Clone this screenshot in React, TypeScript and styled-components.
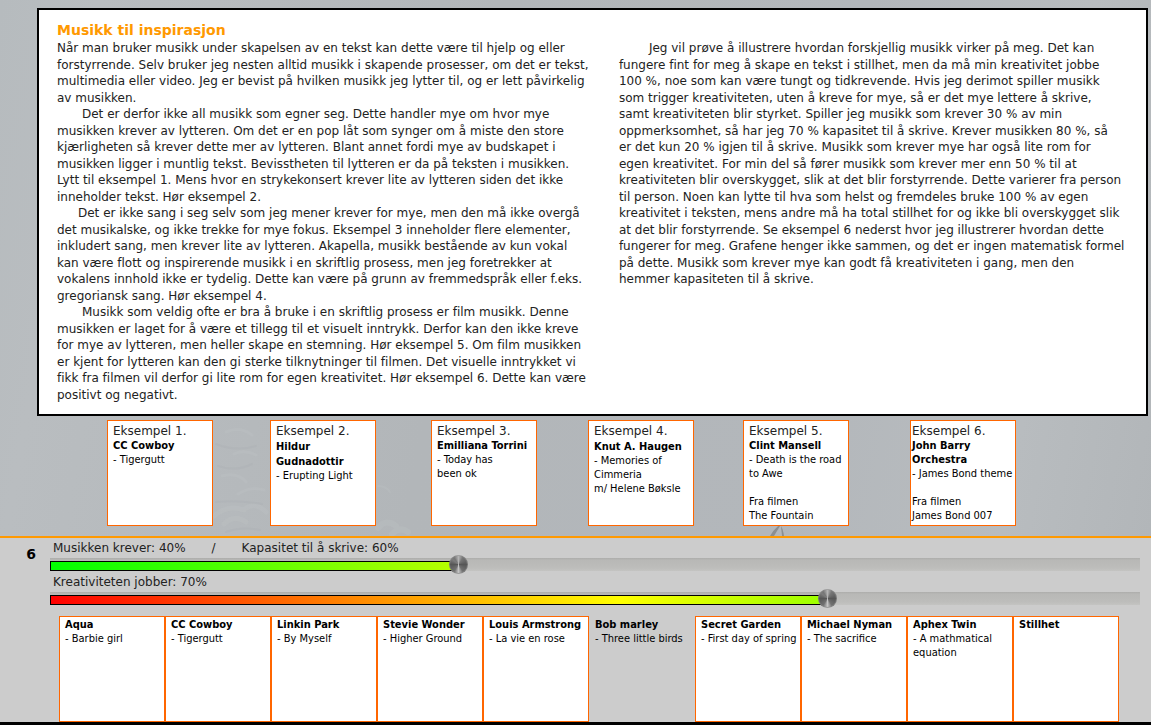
import React, { useState } from "react";
import styled, { createGlobalStyle, css } from "styled-components";

const GlobalStyle = createGlobalStyle`
  * { box-sizing: border-box; }
  body {
    margin: 0;
    background: #cccccc;
    font-family: "DejaVu Sans", "Liberation Sans", sans-serif;
    font-size: 12px;
    font-variant-ligatures: none;
    color: #222222;
  }
  p, h1, h2 { margin: 0; }
`;

const Page = styled.div`
  min-height: 100vh;
  display: flex;
  flex-direction: column;
`;

const Stage = styled.main`
  position: relative;
  padding: 8px 3px 10px 37px;
  background: linear-gradient(100deg, #b6bbbe 0%, #b9bdc0 8%, #b2b6b9 40%, #b3b7bb 70%, #b8bcbf 88%, #b2b6b9 100%);
`;

const Scenery = styled.svg`
  position: absolute;
  left: 0;
  bottom: 0;
  width: 1151px;
  max-width: 100%;
  height: 124px;
`;

const Article = styled.article`
  position: relative;
  display: grid;
  grid-template-columns: 20fr 19fr;
  column-gap: 26px;
  padding: 11px 18px 11px;
  border: 2px solid #000000;
  background: #ffffff;
`;

const Title = styled.h1`
  grid-column: 1 / -1;
  padding-bottom: 1px;
  color: #ff9900;
  font-size: 14px;
  line-height: 18px;
`;

const Column = styled.div`
  display: grid;
  grid-auto-rows: 17px 16px;
  align-content: start;
  white-space: nowrap;
`;

const Paragraph = styled.p<{ $indent: number }>`
  display: contents;
  line-height: 16px;
  span:first-child { padding-left: ${(p) => p.$indent}px; }
`;

const ExampleRow = styled.section`
  position: relative;
  display: grid;
  grid-template-columns: 163fr 161fr 157fr 155fr 167fr 241fr;
  margin: 4px -3px 0 0;
  padding-left: 70px;
`;

const Card = styled.button<{ $active?: boolean; $tight?: boolean }>`
  appearance: none;
  display: flex;
  flex-direction: column;
  width: 106px;
  height: 106px;
  padding: 1px 0 0 ${(p) => (p.$tight ? 1 : 5)}px;
  border: 1px solid #ff6600;
  border-radius: 0;
  background: #ffffff;
  color: #000000;
  font-family: "DejaVu Sans Condensed", "DejaVu Sans", sans-serif;
  font-size: 11px;
  line-height: 14px;
  text-align: left;
  white-space: pre;
  cursor: pointer;
  ${(p) => p.$active && css`
    border-color: transparent;
    background: transparent;
  `}
`;

const CardTitle = styled.span`
  padding-top: 1px;
  font-family: "DejaVu Sans", sans-serif;
  font-size: 12px;
  line-height: 16px;
  color: #222222;
`;

const Artist = styled.strong<{ $loose?: boolean }>`
  line-height: ${(p) => (p.$loose ? 15 : 14)}px;
`;

const Player = styled.section`
  flex: 1;
  display: grid;
  grid-template-columns: 50px 1fr;
  padding-right: 11px;
  border-top: 2px solid #ff9900;
  border-bottom: 3px solid #000000;
  background: #cccccc;
`;

const Step = styled.h2`
  padding: 7px 14px 0 0;
  color: #000000;
  font-size: 14px;
  line-height: 18px;
  text-align: right;
`;

const SliderLabel = styled.label`
  display: flex;
  gap: 26px;
  padding: 2px 0 0 3px;
  line-height: 16px;
`;

const Track = styled.div`
  display: grid;
  grid-template-rows: 13px;
  align-items: center;
  margin-top: 2px;
  background: linear-gradient(#adadab, #b8b8b6 2px, #bdbdbb 10px, #c4c4c2);
  > * { grid-area: 1 / 1; }
`;

const Fill = styled.div<{ $colors: string }>`
  align-self: end;
  height: 10px;
  border: 1px solid #000000;
  background: linear-gradient(90deg, ${(p) => p.$colors});
`;

const Range = styled.input`
  appearance: none;
  z-index: 1;
  width: 100%;
  height: 19px;
  margin: 0;
  background: transparent;
  &::-webkit-slider-thumb {
    appearance: none;
    width: 19px;
    height: 19px;
    border: 1px solid #88888899;
    border-radius: 50%;
    background: conic-gradient(#b4b4b4, #767676 9%, #6a6a6a 16%, #565656 25%, #666666 34%, #707070 41%, #c4c4c4 50%, #707070 59%, #666666 66%, #565656 75%, #7c7c7c 86%, #767676 91%, #b4b4b4);
  }
`;

const SliderGroup = styled.div`
  height: 34px;
`;

const Playlist = styled.div`
  display: flex;
  padding: 10px 0 0 9px;
`;

const LEFT: { indent: number; lines: string[] }[] = [
  { indent: 0, lines: [
    "Når man bruker musikk under skapelsen av en tekst kan dette være til hjelp og eller",
    "forstyrrende. Selv bruker jeg nesten alltid musikk i skapende prosesser, om det er tekst,",
    "multimedia eller video. Jeg er bevist på hvilken musikk jeg lytter til, og er lett påvirkelig",
    "av musikken.",
  ] },
  { indent: 25, lines: [
    "Det er derfor ikke all musikk som egner seg. Dette handler mye om hvor mye",
    "musikken krever av lytteren. Om det er en pop låt som synger om å miste den store",
    "kjærligheten så krever dette mer av lytteren. Blant annet fordi mye av budskapet i",
    "musikken ligger i muntlig tekst. Bevisstheten til lytteren er da på teksten i musikken.",
    "Lytt til eksempel 1. Mens hvor en strykekonsert krever lite av lytteren siden det ikke",
    "inneholder tekst. Hør eksempel 2.",
  ] },
  { indent: 21, lines: [
    "Det er ikke sang i seg selv som jeg mener krever for mye, men den må ikke overgå",
    "det musikalske, og ikke trekke for mye fokus. Eksempel 3 inneholder flere elementer,",
    "inkludert sang, men krever lite av lytteren. Akapella, musikk bestående av kun vokal",
    "kan være flott og inspirerende musikk i en skriftlig prosess, men jeg foretrekker at",
    "vokalens innhold ikke er tydelig. Dette kan være på grunn av fremmedspråk eller f.eks.",
    "gregoriansk sang. Hør eksempel 4.",
  ] },
  { indent: 25, lines: [
    "Musikk som veldig ofte er bra å bruke i en skriftlig prosess er film musikk. Denne",
    "musikken er laget for å være et tillegg til et visuelt inntrykk. Derfor kan den ikke kreve",
    "for mye av lytteren, men heller skape en stemning. Hør eksempel 5. Om film musikken",
    "er kjent for lytteren kan den gi sterke tilknytninger til filmen. Det visuelle inntrykket vi",
    "fikk fra filmen vil derfor gi lite rom for egen kreativitet. Hør eksempel 6. Dette kan være",
    "positivt og negativt.",
  ] },
];

const RIGHT: { indent: number; lines: string[] }[] = [
  { indent: 30, lines: [
    "Jeg vil prøve å illustrere hvordan forskjellig musikk virker på meg. Det kan",
    "fungere fint for meg å skape en tekst i stillhet, men da må min kreativitet jobbe",
    "100 %, noe som kan være tungt og tidkrevende. Hvis jeg derimot spiller musikk",
    "som trigger kreativiteten, uten å kreve for mye, så er det mye lettere å skrive,",
    "samt kreativiteten blir styrket. Spiller jeg musikk som krever 30 % av min",
    "oppmerksomhet, så har jeg 70 % kapasitet til å skrive. Krever musikken 80 %, så",
    "er det kun 20 % igjen til å skrive. Musikk som krever mye har også lite rom for",
    "egen kreativitet. For min del så fører musikk som krever mer enn 50 % til at",
    "kreativiteten blir overskygget, slik at det blir forstyrrende. Dette varierer fra person",
    "til person. Noen kan lytte til hva som helst og fremdeles bruke 100 % av egen",
    "kreativitet i teksten, mens andre må ha total stillhet for og ikke bli overskygget slik",
    "at det blir forstyrrende. Se eksempel 6 nederst hvor jeg illustrerer hvordan dette",
    "fungerer for meg. Grafene henger ikke sammen, og det er ingen matematisk formel",
    "på dette. Musikk som krever mye kan godt få kreativiteten i gang, men den",
    "hemmer kapasiteten til å skrive.",
  ] },
];

const EXAMPLES = [
  { title: "Eksempel 1.", artist: "CC Cowboy", text: "- Tigergutt" },
  { title: "Eksempel 2.", artist: "Hildur\nGudnadottir", text: "- Erupting Light", loose: true },
  { title: "Eksempel 3.", artist: "Emilliana Torrini", text: "- Today has\nbeen ok" },
  { title: "Eksempel 4.", artist: "Knut A. Haugen", text: "- Memories of\nCimmeria\nm/ Helene Bøksle", loose: true },
  { title: "Eksempel 5.", artist: "Clint Mansell", text: "- Death is the road\nto Awe\n\nFra filmen\nThe Fountain" },
  { title: "Eksempel 6.", artist: "John Barry\nOrchestra", text: "- James Bond theme\n\nFra filmen\nJames Bond 007", tight: true },
];

const SONGS = [
  ["Aqua", "- Barbie girl"],
  ["CC Cowboy", "- Tigergutt"],
  ["Linkin Park", "- By Myself"],
  ["Stevie Wonder", "- Higher Ground"],
  ["Louis Armstrong", "- La vie en rose"],
  ["Bob marley", "- Three little birds"],
  ["Secret Garden", "- First day of spring"],
  ["Michael Nyman", "- The sacrifice"],
  ["Aphex Twin", "- A mathmatical\nequation"],
  ["Stillhet", ""],
];

function Text({ paragraphs }: { paragraphs: typeof LEFT }) {
  return (
    <Column>
      {paragraphs.map((p, i) => (
        <Paragraph key={i} $indent={p.indent}>
          {p.lines.map((line) => <span key={line}>{line} </span>)}
        </Paragraph>
      ))}
    </Column>
  );
}

/* Faint snowy branches and a dark twig behind the example cards. */
function Backdrop() {
  return (
    <Scenery viewBox="0 0 1151 124" preserveAspectRatio="xMinYMax meet" aria-hidden="true">
      <g fill="none" stroke="#c3c8ca" strokeLinecap="round" opacity="0.22">
        <path d="M226 20q14-6 26 3M234 42q10-5 22 1M222 64q16-4 24 6M238 82q12-8 26-4" strokeWidth="3" />
        <path d="M214 104q14-12 30-6M224 112q10-10 22-2M246 96q10-6 20 4" strokeWidth="5" />
        <path d="M378 116q8-10 18-2M392 122q8-8 16-2" strokeWidth="6" />
        <path d="M378 74q8 0 12 6" strokeWidth="2" />
      </g>
      <g fill="none" stroke="#a8adb0" strokeLinecap="round" opacity="0.25">
        <path d="M216 32q20 8 40 2M218 54q18 6 34-2M216 90q22-2 46 2M226 120q16-6 34-2" strokeWidth="2" />
      </g>
      <path d="M770 124q7-12 17-15l-7 5-6 10zM781 114q2 3 3 10h-2z" fill="#8c8f91" />
    </Scenery>
  );
}

function Slider({ id, initial, colors }: { id: string; initial: number; colors: string }) {
  const [value, setValue] = useState(initial);
  return (
    <Track>
      <Fill $colors={colors} style={{ width: `${value / 10}%` }} />
      <Range id={id} type="range" min={0} max={1000} value={value} onChange={(e) => setValue(Number(e.target.value))} />
    </Track>
  );
}

export default function App() {
  const [active, setActive] = useState(5);
  return (
    <Page>
      <GlobalStyle />
      <Stage>
        <Backdrop />
        <Article>
          <Title>Musikk til inspirasjon</Title>
          <Text paragraphs={LEFT} />
          <Text paragraphs={RIGHT} />
        </Article>
        <ExampleRow>
          {EXAMPLES.map((e) => (
            <Card key={e.title} type="button" $tight={e.tight}>
              <CardTitle>{e.title}</CardTitle>
              <Artist $loose={e.loose}>{e.artist}</Artist>
              <span>{e.text}</span>
            </Card>
          ))}
        </ExampleRow>
      </Stage>
      <Player>
        <Step>6</Step>
        <div>
          <SliderGroup>
            <SliderLabel htmlFor="demand">
              <span>Musikken krever: 40%</span>
              <span>/</span>
              <span>Kapasitet til å skrive: 60%</span>
            </SliderLabel>
            <Slider id="demand" initial={373} colors="#00ff00, #b8ff00" />
          </SliderGroup>
          <SliderGroup>
            <SliderLabel htmlFor="creativity">Kreativiteten jobber: 70%</SliderLabel>
            <Slider id="creativity" initial={717} colors="#ff0000, #ffff00 73%, #99ff00" />
          </SliderGroup>
          <Playlist>
            {SONGS.map(([artist, song], i) => (
              <Card key={artist} type="button" $active={i === active} onClick={() => setActive(i)}>
                <Artist>{artist}</Artist>
                <span>{song}</span>
              </Card>
            ))}
          </Playlist>
        </div>
      </Player>
    </Page>
  );
}
